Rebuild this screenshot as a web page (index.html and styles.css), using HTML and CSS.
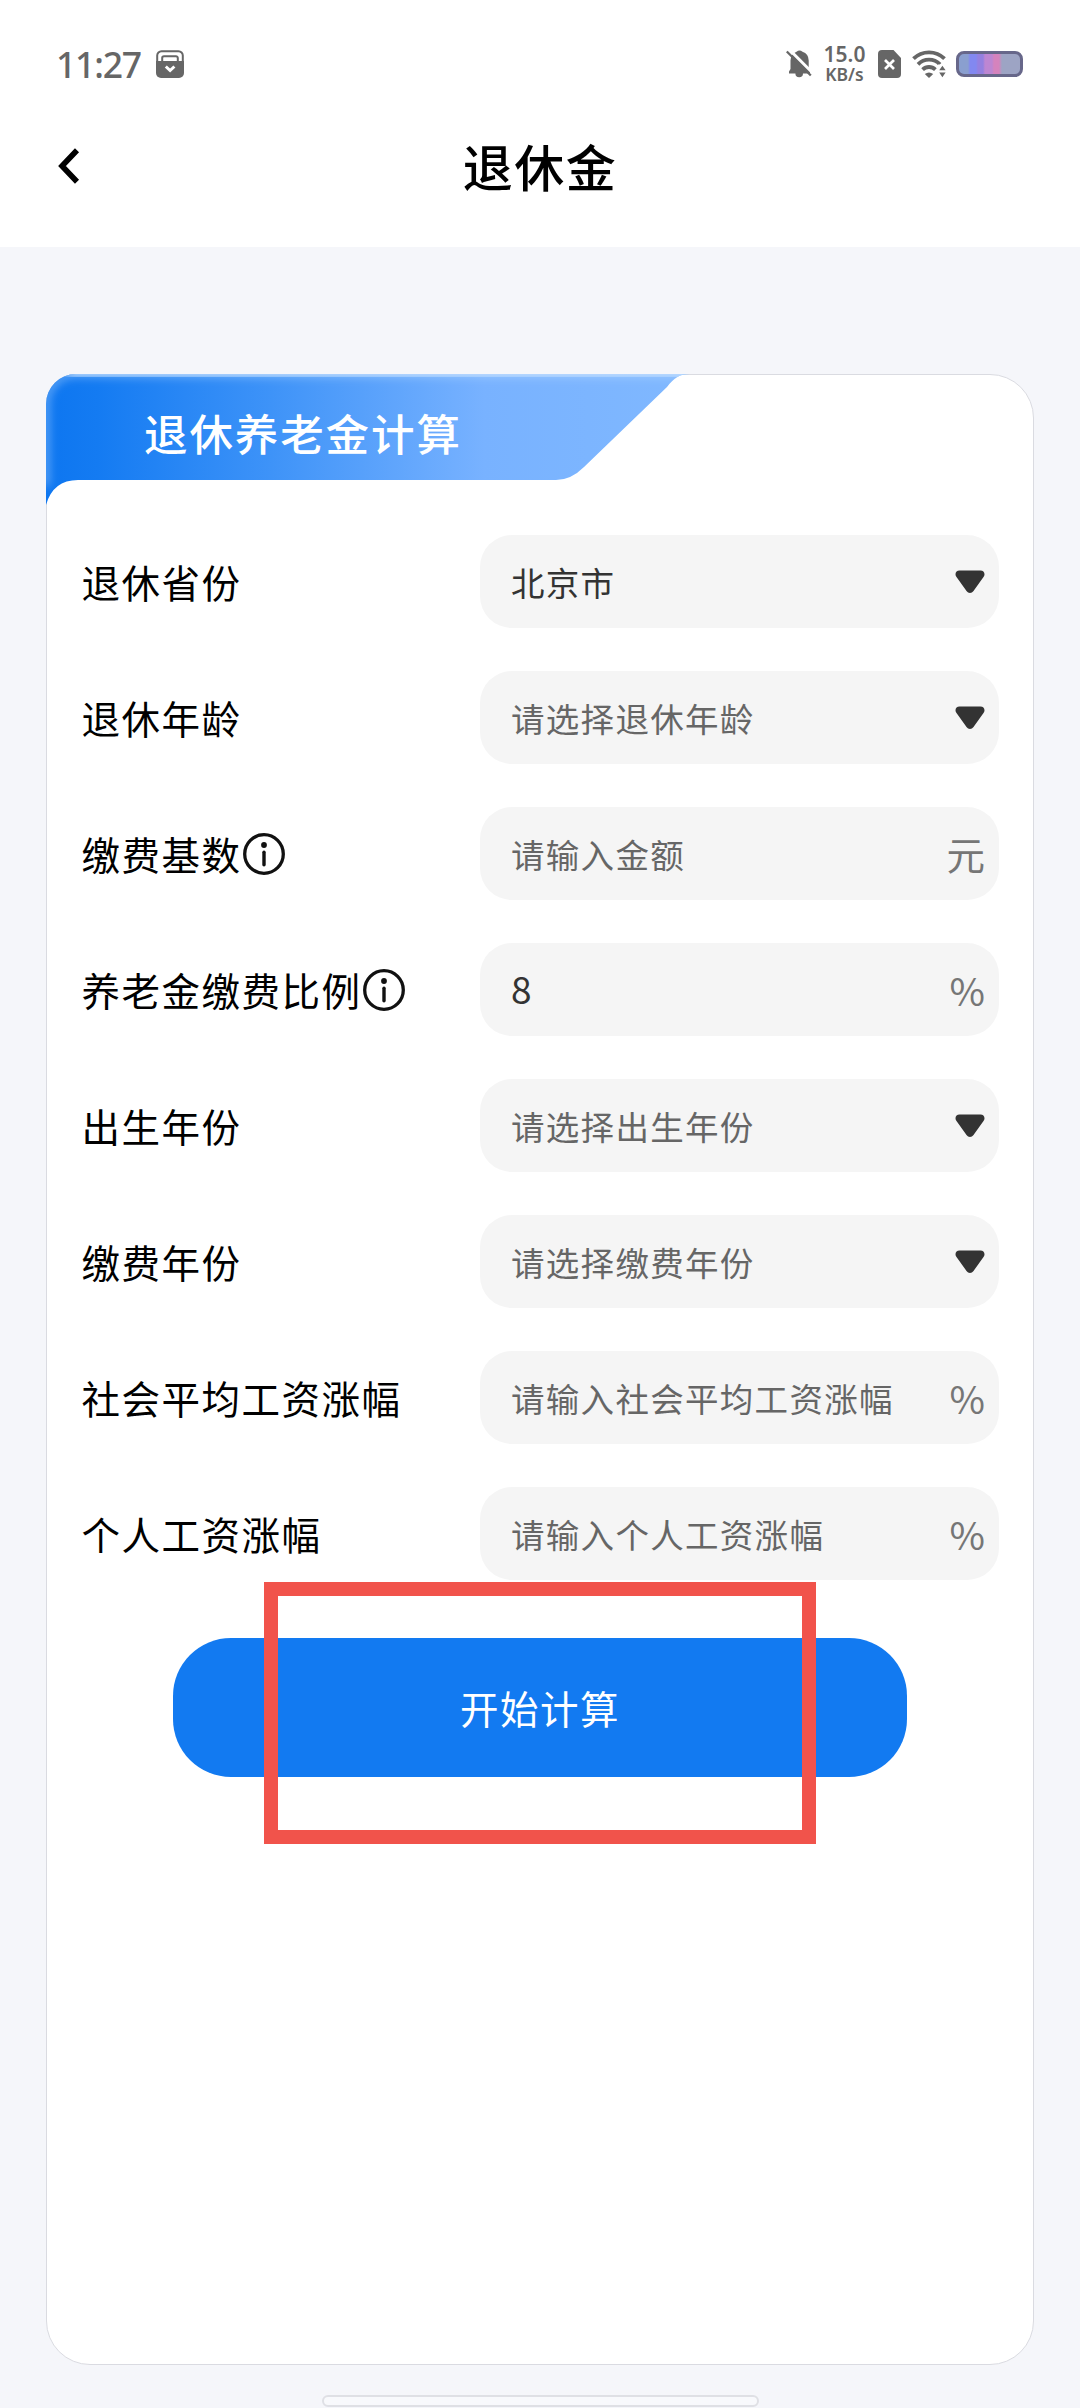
FILE: index.html
```html
<!DOCTYPE html>
<html lang="zh-CN">
<head>
<meta charset="utf-8">
<title>退休金</title>
<link rel="stylesheet" href="styles.css">
</head>
<body>
<svg class="defs" width="0" height="0">
  <symbol id="caret" viewBox="0 0 30 24"><path d="M4.500 0.500h21c3.600 0 5.200 3.600 3 6.500L18.500 21c-1.800 2.600-5.200 2.600-7 0L1.500 7C-.7 4.100.9.500 4.500.500z" fill="#333"/></symbol>
  <symbol id="info" viewBox="0 0 42 42"><circle cx="21" cy="21" r="19.300" fill="none" stroke="#111" stroke-width="3.300"/><circle cx="21" cy="12" r="2.900" fill="#111"/><path d="M21 19.200v12.600" stroke="#111" stroke-width="3.400" stroke-linecap="round"/></symbol>
</svg>
<header class="top">
  <div class="status">
    <div class="status-side">
      <span class="time">11:27</span>
      <svg width="28" height="28" viewBox="0 0 28 28"><path d="M1.200 12V5.500a4.300 4.300 0 0 1 4.300-4.300h17a4.300 4.300 0 0 1 4.300 4.300V12M6.200 12V8a1.800 1.800 0 0 1 1.800-1.800h12A1.800 1.800 0 0 1 21.800 8v4" fill="none" stroke="#666" stroke-width="2"/><path d="M0 11h28v12a5 5 0 0 1-5 5H5a5 5 0 0 1-5-5z" fill="#666"/><path d="M9.800 16.500l4.300 4 4.300-4" fill="none" stroke="#fff" stroke-width="3"/></svg>
    </div>
    <div class="status-side">
      <svg class="bell" width="26" height="28" viewBox="0 0 26 28"><path d="M3 23.500v-2l1.500-2.500v-8.500a9.300 9.300 0 0 1 6-8.700q3-2.600 6 0a9.300 9.300 0 0 1 6.200 8.700v8.500l1.300 2.500v2h-7a3.800 3.800 0 0 1-7.600 0z" fill="#666"/><path d="M3-.7l24 24" stroke="#fff" stroke-width="3"/><path d="M.8 1.500l24 24" stroke="#666" stroke-width="2.300"/></svg>
      <div class="speed"><span class="rate">15.0</span><span class="unit">KB/s</span></div>
      <svg class="sim" width="23" height="28" viewBox="0 0 23 28"><path d="M4 0h11.500L23 8v16a4 4 0 0 1-4 4H4a4 4 0 0 1-4-4V4a4 4 0 0 1 4-4z" fill="#666"/><path d="M7 10l9 9M16 10l-9 9" stroke="#fff" stroke-width="2.700"/></svg>
      <svg class="wifi" width="34" height="28" viewBox="0 0 34 28"><g fill="none" stroke="#666" stroke-width="3.800"><path d="M1.500 8.700a22 22 0 0 1 31 0"/><path d="M6 14.300a15.500 15.500 0 0 1 22 0"/><path d="M10.600 19.600a9.200 9.200 0 0 1 12.800 0"/></g><path d="M12.800 24q4.200-3 8.400 0L17 28z" fill="#666"/><path d="M26 14.500h8v13.500h-8z" fill="#fff"/><path d="M27.200 20.300l3.200-4.600 3.200 4.600zM27.200 22.600h6.400l-3.200 4.600z" fill="#666"/></svg>
      <div class="battery"></div>
    </div>
  </div>
  <div class="nav">
    <svg class="back" width="24" height="38" viewBox="0 0 24 38"><path d="M20 3.200L5 19l15 15.800" fill="none" stroke="#000" stroke-width="5.600"/></svg>
    <h1 class="title">退休金</h1>
  </div>
</header>
<main class="card">
  <div class="banner">
    <svg class="banner-bg" width="644" height="134" viewBox="0 0 644 134">
      <defs>
        <linearGradient id="blue" x1="0" y1="0" x2="1" y2="0"><stop offset="0" stop-color="#0d76f0"/><stop offset=".08" stop-color="#147bf2"/><stop offset=".35" stop-color="#3e93f8"/><stop offset=".68" stop-color="#78b2ff"/><stop offset="1" stop-color="#80b8ff"/></linearGradient>
        <clipPath id="shape"><path d="M0 131V30A30 30 0 0 1 30 0H644C633 0 628 4 621 13L538 93Q525 106 510 106H32Q7 106 0 131z"/></clipPath>
        <filter id="soft" x="-10%" y="-30%" width="120%" height="160%"><feGaussianBlur stdDeviation="4"/></filter>
      </defs>
      <g clip-path="url(#shape)"><path d="M0 0h644v134H0z" fill="url(#blue)"/><path d="M0 112V30A30 30 0 0 1 30 0H640" fill="none" stroke="#c4e0ff" stroke-opacity=".45" stroke-width="7" filter="url(#soft)"/><path d="M24 0H644V-10H24z" fill="#c4e0ff" stroke="#c4e0ff" stroke-opacity=".7" stroke-width="7" filter="url(#soft)"/></g>
    </svg>
    <h2 class="banner-title">退休养老金计算</h2>
  </div>
  <div class="form">
    <div class="row"><div class="label">退休省份</div><div class="field"><span class="value">北京市</span><svg class="caret"><use href="#caret"/></svg></div></div>
    <div class="row"><div class="label">退休年龄</div><div class="field"><span class="hint">请选择退休年龄</span><svg class="caret"><use href="#caret"/></svg></div></div>
    <div class="row"><div class="label"><span>缴费基数</span><svg class="info"><use href="#info"/></svg></div><div class="field"><span class="hint">请输入金额</span><span class="suffix">元</span></div></div>
    <div class="row"><div class="label"><span>养老金缴费比例</span><svg class="info"><use href="#info"/></svg></div><div class="field"><span class="value number">8</span><span class="suffix">%</span></div></div>
    <div class="row"><div class="label">出生年份</div><div class="field"><span class="hint">请选择出生年份</span><svg class="caret"><use href="#caret"/></svg></div></div>
    <div class="row"><div class="label">缴费年份</div><div class="field"><span class="hint">请选择缴费年份</span><svg class="caret"><use href="#caret"/></svg></div></div>
    <div class="row"><div class="label">社会平均工资涨幅</div><div class="field"><span class="hint">请输入社会平均工资涨幅</span><span class="suffix">%</span></div></div>
    <div class="row"><div class="label">个人工资涨幅</div><div class="field"><span class="hint">请输入个人工资涨幅</span><span class="suffix">%</span></div></div>
  </div>
  <div class="action">
    <div class="submit">开始计算</div>
    <div class="highlight"></div>
  </div>
</main>
<div class="home-bar"></div>
</body>
</html>
```
FILE: styles.css
```css
* { box-sizing: border-box; }
body {
  margin: 0;
  width: 1080px;
  height: 2408px;
  overflow: hidden;
  background: #f5f6fa;
  font-family: "Noto Sans CJK SC", sans-serif;
  color: #000;
  display: flex;
  flex-direction: column;
}
svg { display: block; flex: none; }
.defs { position: absolute; }
.top { height: 247px; background: #fff; flex: none; }
.status {
  height: 128px;
  padding: 0 57px 0 56px;
  display: flex;
  justify-content: space-between;
  align-items: center;
  color: #666;
}
.status-side { display: flex; align-items: center; }
.time {
  width: 100px;
  font: 500 35.500px/40px "Noto Sans", sans-serif;
  letter-spacing: -1.200px;
}
.speed {
  width: 41px;
  margin-left: 12px;
  display: flex;
  flex-direction: column;
  align-items: center;
  font-family: "Noto Sans", sans-serif;
  font-weight: 600;
}
.rate { font-size: 21px; line-height: 19px; }
.unit { font-size: 17.500px; line-height: 20px; }
.sim { margin-left: 13px; }
.wifi { margin-left: 11px; }
.battery {
  width: 67px;
  height: 26px;
  margin-left: 10px;
  border: 3px solid #67678a;
  border-radius: 8px;
  background: linear-gradient(90deg, #8a9fcf 0 9px, #8288f0 11px 17px, #9480e0 19px 24px, #bd86d2 26px 33px, #d583bd 35px 40px, #9da4c4 43px);
}
.nav {
  height: 76px;
  padding: 0 57px;
  display: grid;
  grid-template-columns: 24px 1fr 24px;
  align-items: center;
}
.title { margin: 0; padding-bottom: 2px; text-align: center; font-size: 50px; line-height: 60px; font-weight: 500; letter-spacing: 1.500px; }
.card {
  width: 988px;
  height: 1991px;
  margin: 127px 0 0 46px;
  flex: none;
  border: 1px solid #dadbe1;
  border-radius: 44px;
  border-top-left-radius: 30px;
  background: #fff;
}
.banner { position: relative; height: 160px; }
.banner-bg { position: absolute; left: -1px; top: -1px; }
.banner-title {
  position: relative;
  margin: 0;
  padding-left: 97px;
  font-size: 43.500px;
  line-height: 115px;
  font-weight: 500;
  letter-spacing: 1.900px;
  color: #fff;
}
.form { padding: 0 34px; display: flex; flex-direction: column; gap: 43px; }
.row { height: 93px; display: flex; align-items: center; justify-content: space-between; }
.label { display: flex; align-items: center; padding: 0 0 2px 0.500px; font-size: 38.500px; line-height: 56px; letter-spacing: 1.500px; }
.info { width: 42px; height: 42px; margin: 2px 0 0 1px; }
.field {
  width: 519px;
  height: 93px;
  padding: 0 14px 0 31px;
  border-radius: 32px;
  background: #f5f5f5;
  display: flex;
  align-items: center;
  justify-content: space-between;
}
.value, .hint { font-size: 33.500px; line-height: 50px; letter-spacing: 1.300px; }
.value { color: #333; }
.hint { color: #666; }
.number { padding-bottom: 3px; font-size: 37px; }
.suffix { padding-bottom: 2px; font-size: 38.500px; line-height: 56px; color: #767676; }
.caret { width: 30px; height: 24px; }
.action { position: relative; height: 139px; margin-top: 58px; }
.submit {
  width: 734px;
  height: 139px;
  margin: 0 auto;
  border-radius: 58px;
  background: #127af1;
  color: #fff;
  font-size: 38.500px;
  line-height: 139px;
  letter-spacing: 1.500px;
  text-align: center;
}
.highlight {
  position: absolute;
  left: 217px;
  top: -56px;
  width: 552px;
  height: 262px;
  border: 14px solid #f1534b;
}
.home-bar {
  width: 437px;
  height: 12px;
  margin: 30px auto 0;
  flex: none;
  border: 2px solid #dfe0e5;
  border-radius: 6px;
  background: #f8f9fc;
}
```
